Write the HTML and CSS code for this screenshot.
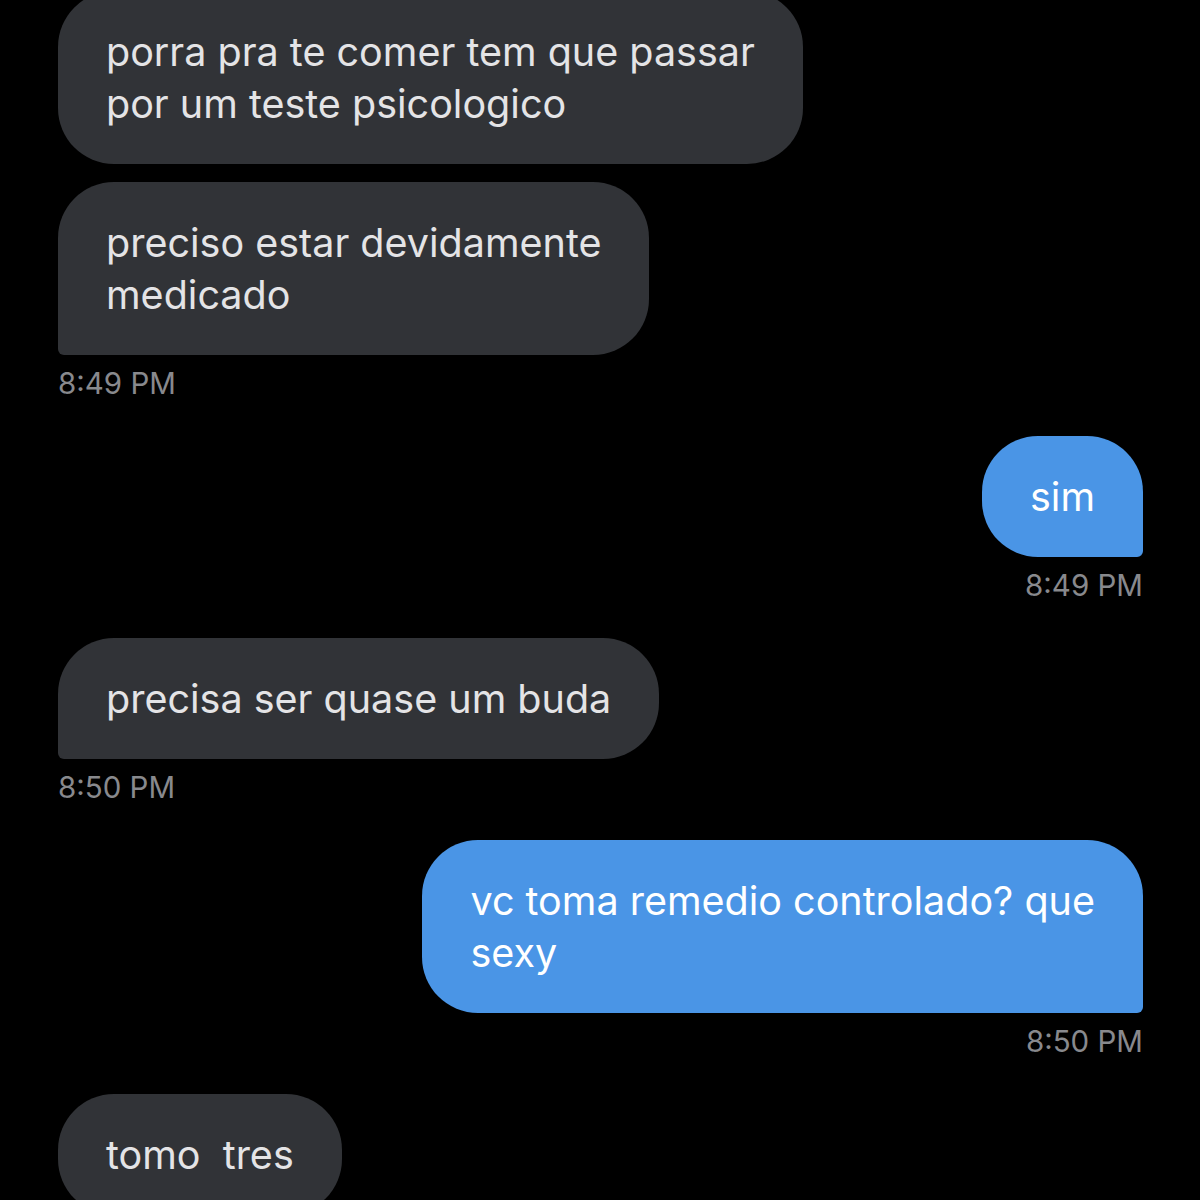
FILE: index.html
```html
<!DOCTYPE html>
<html lang="pt">
<head>
    <meta charset="UTF-8">
    <title>Mensagens</title>
    <link rel="stylesheet" href="styles.css">
</head>
<body>
    <section class="chat">
        <div class="group them">
            <div class="bubble first">porra pra te comer tem que passar<br>por um teste psicologico</div>
            <div class="bubble last">preciso estar devidamente<br>medicado</div>
            <div class="time">8:49 PM</div>
        </div>

        <div class="group me">
            <div class="bubble last">sim</div>
            <div class="time">8:49 PM</div>
        </div>

        <div class="group them">
            <div class="bubble last">precisa ser quase um buda</div>
            <div class="time">8:50 PM</div>
        </div>

        <div class="group me">
            <div class="bubble last">vc toma remedio controlado? que<br>sexy</div>
            <div class="time">8:50 PM</div>
        </div>

        <div class="group them">
            <div class="bubble">tomo&nbsp; tres</div>
        </div>
    </section>
</body>
</html>
```

FILE: styles.css
```css
body {
    margin: 0;
    background: #000;
    font-family: Inter, 'Noto Sans', sans-serif;
    overflow: hidden;
}

.chat {
    padding: 0 57px 0 58px;
    margin-top: -9px;
}

.group {
    display: flex;
    flex-direction: column;
    gap: 18px;
    margin-bottom: 37px;
}

.them {
    align-items: flex-start;
}

.me {
    align-items: flex-end;
}

.bubble {
    font-size: 39.5px;
    line-height: 52px;
    padding: 35px 48px 34px;
    border-radius: 56px;
}

.them .bubble {
    background: #313337;
    color: #e4e4e6;
}

.me .bubble {
    background: #4a95e6;
    color: #fff;
}

.them .bubble.last {
    border-bottom-left-radius: 6px;
}

.me .bubble.last {
    border-bottom-right-radius: 6px;
}

.time {
    margin-top: -6px;
    font-size: 29.5px;
    line-height: 32px;
    color: #88898d;
}
```
